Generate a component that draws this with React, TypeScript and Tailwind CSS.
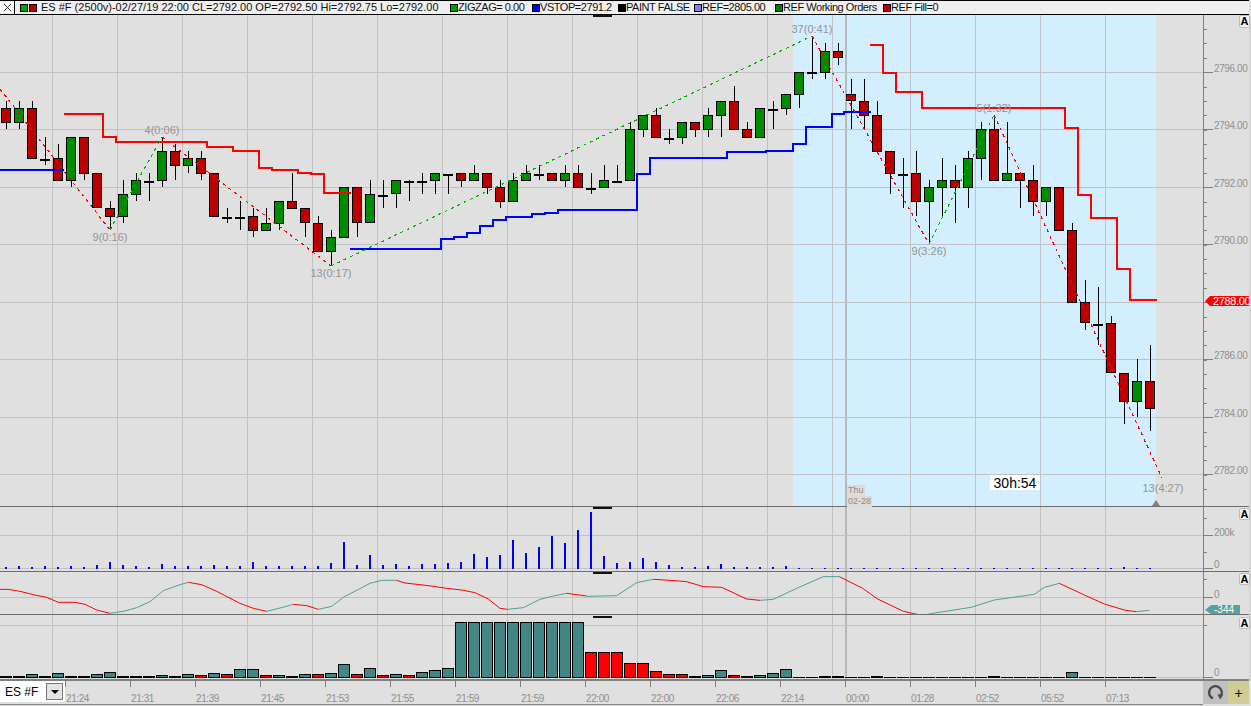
import type { ReactNode } from "react";

type Candle = [high: number, top: number, bottom: number, low: number, kind: "g" | "r" | "d"];

const candles: Candle[] = [
  [101, 108, 122, 129, "r"], [101, 108, 122, 129, "g"], [101, 108, 158, 158, "r"], [137, 159, 159, 165, "d"],
  [144, 158, 180, 180, "r"], [137, 137, 180, 187, "g"], [137, 137, 173, 180, "r"], [173, 173, 207, 207, "r"],
  [201, 208, 216, 230, "r"], [180, 194, 216, 223, "g"], [173, 180, 194, 201, "g"], [173, 181, 181, 201, "d"],
  [137, 151, 180, 187, "g"], [144, 151, 165, 180, "r"], [151, 158, 165, 173, "g"], [151, 158, 173, 180, "r"],
  [173, 173, 216, 216, "r"], [208, 217, 217, 223, "d"], [201, 217, 217, 230, "d"], [208, 216, 230, 237, "r"],
  [208, 223, 230, 230, "g"], [201, 201, 223, 230, "g"], [173, 201, 208, 208, "r"], [208, 208, 222, 237, "r"],
  [216, 223, 251, 251, "r"], [230, 237, 251, 266, "g"], [187, 187, 237, 237, "g"], [187, 187, 222, 237, "r"],
  [180, 194, 222, 222, "g"], [180, 195, 195, 208, "d"], [180, 180, 193, 208, "g"], [180, 181, 181, 201, "d"],
  [173, 181, 181, 194, "d"], [173, 173, 180, 194, "g"], [174, 174, 174, 194, "d"], [173, 173, 180, 187, "r"],
  [165, 173, 180, 180, "g"], [173, 173, 187, 194, "r"], [180, 187, 201, 208, "r"], [173, 180, 201, 201, "g"],
  [165, 173, 180, 180, "g"], [165, 174, 174, 180, "d"], [173, 173, 180, 180, "r"], [165, 173, 180, 187, "g"],
  [165, 173, 187, 187, "r"], [173, 188, 188, 194, "d"], [165, 180, 187, 187, "g"], [165, 181, 181, 181, "d"],
  [122, 129, 180, 180, "g"], [115, 115, 129, 137, "g"], [108, 115, 137, 137, "r"], [129, 138, 138, 144, "d"],
  [122, 122, 137, 144, "g"], [122, 122, 129, 137, "r"], [108, 115, 129, 137, "g"], [101, 101, 115, 137, "g"],
  [86, 101, 129, 129, "r"], [122, 129, 137, 137, "r"], [108, 108, 137, 137, "g"], [101, 109, 109, 129, "d"],
  [94, 94, 108, 115, "g"], [72, 72, 94, 108, "g"], [36, 72, 72, 79, "d"], [43, 51, 72, 79, "g"],
  [43, 51, 57, 65, "r"], [79, 94, 100, 129, "r"], [79, 101, 115, 129, "r"], [101, 115, 151, 151, "r"],
  [151, 151, 173, 194, "r"], [158, 174, 174, 208, "d"], [151, 173, 201, 216, "r"], [180, 187, 201, 244, "g"],
  [158, 180, 187, 217, "g"], [165, 180, 187, 223, "r"], [151, 158, 187, 208, "g"], [122, 129, 158, 180, "g"],
  [115, 129, 180, 180, "r"], [122, 173, 180, 180, "g"], [173, 173, 180, 208, "r"], [165, 180, 201, 216, "r"],
  [187, 187, 201, 216, "g"], [187, 187, 230, 230, "r"], [223, 230, 302, 302, "r"], [280, 302, 322, 330, "r"],
  [287, 324, 324, 345, "d"], [316, 323, 372, 372, "r"], [373, 373, 401, 424, "r"], [359, 381, 401, 417, "g"],
  [345, 381, 408, 431, "r"],
];

const volumes = [
  2, 3, 2, 3, 2, 3, 2, 4, 7, 4, 3, 2, 5, 3, 3, 3, 4, 3, 3, 7, 3, 3, 3, 3, 3, 6, 27, 4, 14, 4, 5, 3,
  5, 5, 6, 7, 15, 12, 14, 29, 16, 22, 33, 26, 39, 57, 13, 6, 7, 11, 7, 4, 2, 2, 3, 5, 2, 2, 2, 2, 3, 1, 1, 1, 1,
  1, 1, 1, 1, 1, 1, 1, 1, 1, 1, 1, 1, 1, 1, 1, 1, 1, 1, 1, 1, 1, 2, 1, 1,
];

// height above the zero line: 0 and 1 are flat black dashes, colour "t" teal, "r" red
const deltaBars: [number, "t" | "r" | "k"][] = [
  [1, "k"], [1, "k"], [3, "t"], [1, "k"], [4, "t"], [1, "k"], [1, "k"], [3, "t"], [5, "t"], [1, "k"], [1, "k"], [1, "k"],
  [2, "t"], [1, "k"], [3, "t"], [2, "r"], [4, "t"], [3, "r"], [8, "t"], [8, "t"], [2, "r"], [2, "t"], [1, "k"], [3, "t"],
  [3, "r"], [4, "t"], [13, "t"], [3, "r"], [9, "t"], [2, "r"], [3, "t"], [2, "r"], [5, "t"], [7, "t"], [9, "t"],
  [55, "t"], [55, "t"], [55, "t"], [55, "t"], [55, "t"], [55, "t"], [55, "t"], [55, "t"], [55, "t"], [55, "t"],
  [25, "r"], [25, "r"], [25, "r"], [14, "r"], [14, "r"], [6, "r"], [3, "r"], [3, "r"], [1, "k"], [2, "t"], [7, "t"],
  [2, "r"], [1, "k"], [2, "t"], [4, "t"], [8, "t"], [0, "k"], [0, "k"], [1, "k"], [1, "k"], [0, "k"], [0, "k"], [1, "k"],
  [0, "k"], [0, "k"], [0, "k"], [0, "k"], [0, "k"], [0, "k"], [0, "k"], [0, "k"], [1, "k"], [0, "k"], [0, "k"], [0, "k"],
  [0, "k"], [0, "k"], [5, "t"], [0, "k"], [0, "k"], [0, "k"], [0, "k"], [0, "k"], [0, "k"],
];

const gridXs = [52, 117, 182, 247, 312, 377, 442, 507, 572, 637, 702, 767, 832, 910, 975, 1040, 1105];

const redStops = [
  "64,114 103,114 103,137 116,137 116,142 207,142 207,146.5 233,146.5 233,151 259,151 259,168 272,168 272,170 298,170 298,173 311,173 311,174 324,174 324,193 351,193",
  "870,45 883,45 883,73 896,73 896,92 922,92 922,108 1065,108 1065,128 1078,128 1078,195 1091,195 1091,218 1117,218 1117,269 1130,269 1130,300 1157,300",
];

const blueStops = [
  "0,170 64,170",
  "350,249 441,249 441,239 454,239 454,237 467,237 467,233 480,233 480,226 493,226 493,220 506,220 506,217 532,217 532,214 545,214 545,213 558,213 558,210 637,210 637,174 650,174 650,158 727,158 727,152 766,152 766,151 793,151 793,144 806,144 806,127 832,127 832,114 844,114 844,112 871,112",
];

const zigzags: [string, string][] = [
  ["0,89 110,230", "#ff0000"],
  ["110,230 162,137", "#00b000"],
  ["162,137 331,266", "#ff0000"],
  ["331,266 812,36", "#00b000"],
  ["812,36 929,244", "#ff0000"],
  ["929,244 994,115", "#00b000"],
  ["994,115 1162,478", "#ff0000"],
];

const zigzagLabels: [string, number, number][] = [
  ["9(0:16)", 110, 241],
  ["4(0:06)", 162, 134],
  ["13(0:17)", 331, 277],
  ["37(0:41)", 812, 33],
  ["9(3:26)", 929, 255],
  ["5(1:32)", 994, 112],
  ["13(4:27)", 1163, 492],
];

const prices: [string, number][] = [
  ["2796.00", 72], ["2794.00", 129], ["2792.00", 187], ["2790.00", 244], ["2786.00", 359], ["2784.00", 417], ["2782.00", 474],
];

const osc: [string, string][] = [
  ["r", "0,268 25,268 60,274 100,284 140,292 175,307 225,307 255,313 290,330 330,340"],
  ["t", "330,340 370,334 410,323 450,305 490,272 540,254 565,247"],
  ["r", "565,247 605,254 650,274 720,310 760,325 800,334"],
  ["t", "800,334 840,324 880,313"],
  ["r", "880,313 920,317 955,328"],
  ["t", "955,328 995,319 1030,292 1110,250 1145,241 1190,241"],
  ["r", "1190,241 1215,249 1260,254 1300,259 1340,265 1385,270 1425,278 1465,297 1500,325 1522,328"],
  ["t", "1522,328 1570,323 1620,298 1660,288 1700,280"],
  ["r", "1700,280 1760,288"],
  ["t", "1760,289 1850,287 1910,248 1960,238"],
  ["r", "1960,238 2025,242 2060,245 2110,260 2165,262 2240,297 2280,301"],
  ["t", "2280,301 2320,298 2390,265 2470,230 2518,230"],
  ["r", "2518,230 2588,265 2633,297 2708,333 2741,341 2768,346"],
  ["t", "2768,346 2798,340 2913,322 2983,300 3103,283 3133,262 3178,250"],
  ["r", "3178,250 3253,285 3313,312 3373,330 3408,335"],
  ["t", "3408,335 3448,331"],
];

const oscPoints = (raw: string) =>
  raw
    .split(" ")
    .map((pair) => {
      const [x, y] = pair.split(",").map(Number);
      return `${x / 3},${500 + y / 3}`;
    })
    .join(" ");

const timeLabels: [string, number][] = [
  ["21:24", 65], ["21:31", 130], ["21:39", 195], ["21:45", 260], ["21:53", 325], ["21:55", 390], ["21:59", 455], ["21:59", 520],
  ["22:00", 585], ["22:00", 650], ["22:06", 715], ["22:14", 780], ["00:00", 845], ["01:28", 910], ["02:52", 975], ["05:52", 1040], ["07:13", 1105],
];

const legend = [
  { color: "bg-[#00a000]", text: "ZIGZAG= 0.00", cls: "ml-[9px] w-[76px]" },
  { color: "bg-[#0000ff]", text: "VSTOP=2791.2", cls: "ml-[6px] w-[82px]" },
  { color: "bg-[#000000]", text: "PAINT FALSE", cls: "ml-[4px] w-[71px]" },
  { color: "bg-[#8080ff]", text: "REF=2805.00", cls: "ml-[5px] w-[75px]" },
  { color: "bg-[#008000]", text: "REF Working Orders", cls: "ml-[6px] w-[103px]" },
  { color: "bg-[#c00000]", text: "REF Fill=0", cls: "ml-[5px] w-[60px]" },
];

function Swatch({ color }: { color: string }) {
  return <span className={`block h-[8px] w-[8px] shrink-0 border border-black ${color}`} />;
}

function Header() {
  return (
    <div className="flex h-[15px] w-[1249px] items-center whitespace-nowrap border-y border-black bg-[#f0f0f0] text-[11px] leading-none text-[#111]">
      <div className="flex h-full w-[15px] shrink-0 items-center justify-center border-r border-black bg-[#f4f4f4]">
        <svg width="9" height="9" viewBox="0 0 9 9">
          <path d="M1 1 L8 8 M8 1 L1 8" stroke="#222" strokeWidth="0.9" fill="none" />
        </svg>
      </div>
      <div className="ml-[5px]">
        <Swatch color="bg-[#00a000]" />
      </div>
      <div className="ml-[1px]">
        <Swatch color="bg-[#c00000]" />
      </div>
      <span className="ml-[4px] w-[400px] shrink-0">ES #F (2500v)-02/27/19 22:00 CL=2792.00 OP=2792.50 Hi=2792.75 Lo=2792.00</span>
      {legend.map((item) => (
        <div key={item.text} className={`flex shrink-0 items-center ${item.cls}`}>
          <Swatch color={item.color} />
          <span className="tracking-[-0.45px]">{item.text}</span>
        </div>
      ))}
    </div>
  );
}

function AutoButton({ className }: { className: string }) {
  return (
    <div
      className={`absolute left-[1239px] flex w-[11px] items-center justify-center overflow-hidden rounded-[2px] border border-[#bdbdbd] bg-[#f5f5f5] text-[11px] font-bold leading-none text-black ${className}`}
    >
      A
    </div>
  );
}

function Pane({ top, height, children, extra }: { top: number; height: number; children: ReactNode; extra?: ReactNode }) {
  return (
    <div className="relative w-full shrink-0" style={{ height }}>
      <svg className="block" width={1251} height={height} viewBox={`0 ${top} 1251 ${height}`}>
        {gridXs.map((x) => (
          <rect key={x} x={x} y={top} width={1} height={height} fill="#c2c2c2" shapeRendering="crispEdges" />
        ))}
        <rect x={845} y={top} width={2} height={height} fill="#b8b8b8" shapeRendering="crispEdges" />
        {children}
        <rect x={1203} y={top} width={1} height={height} fill="#808080" shapeRendering="crispEdges" />
        <rect x={1249} y={top} width={2} height={height} fill="#d4d4d4" shapeRendering="crispEdges" />
      </svg>
      {extra}
    </div>
  );
}

function HLine({ y, dark }: { y: number; dark?: boolean }) {
  return <rect x={0} y={y} width={1203} height={1} fill={dark ? "#6e6e6e" : "#c2c2c2"} shapeRendering="crispEdges" />;
}

function Handle({ y }: { y: number }) {
  return <rect x={593} y={y} width={19} height={2} fill="#111" shapeRendering="crispEdges" />;
}

function AxisLabel({ x, y, children }: { x: number; y: number; children: string }) {
  return (
    <text x={x} y={y} fontSize={10} letterSpacing={-0.4} fill="#8f8f8f">
      {children}
    </text>
  );
}

function Tick({ y, major }: { y: number; major?: boolean }) {
  return <rect x={1203} y={y} width={major ? 10 : 4} height={1} fill="#808080" shapeRendering="crispEdges" />;
}

function CandleMark({ candle, x }: { candle: Candle; x: number }) {
  const [high, top, bottom, low, kind] = candle;
  if (kind === "d") {
    return (
      <g shapeRendering="crispEdges">
        <rect x={x} y={high} width={1} height={low - high} fill="#000" />
        <rect x={x - 5} y={top} width={10} height={2} fill="#000" />
      </g>
    );
  }
  return (
    <g shapeRendering="crispEdges">
      <rect x={x} y={high} width={1} height={low - high} fill="#000" />
      <rect x={x - 4.5} y={top + 0.5} width={9} height={bottom - top} fill={kind === "g" ? "#008c00" : "#bb0000"} stroke="#000" strokeWidth={1} />
    </g>
  );
}

function MainPane() {
  const ticks = Array.from({ length: 33 }, (_, k) => Math.round(29 + k * 14.375));
  return (
    <Pane
      top={15}
      height={492}
      extra={
        <>
          <AutoButton className="top-0 h-[13px]" />
          <div className="absolute left-[990px] top-[460px] flex h-[15px] w-[50px] items-center justify-center bg-white text-[14px] leading-none text-black">
            30h:54
          </div>
          <div className="absolute left-[847px] top-[470px] flex flex-col items-start text-[9px] leading-[11px] text-[#9a8a7a]">
            <span className="bg-[#dcdcdc] px-[1px]">Thu</span>
            <span className="bg-[#dcdcdc] px-[1px]">02-28</span>
          </div>
        </>
      }
    >
      <rect x={793} y={15} width={363} height={491} fill="#d2eeff" shapeRendering="crispEdges" />
      {gridXs
        .filter((x) => x > 793 && x < 1156)
        .map((x) => (
          <rect key={x} x={x} y={15} width={1} height={491} fill="#c2c2c2" shapeRendering="crispEdges" />
        ))}
      <rect x={845} y={15} width={2} height={491} fill="#b8b8b8" shapeRendering="crispEdges" />
      {[72, 129, 187, 244, 302, 359, 417, 474].map((y) => (
        <HLine key={y} y={y} />
      ))}
      {candles.map((c, i) => (
        <CandleMark key={i} candle={c} x={6 + 13 * i} />
      ))}
      {redStops.map((p) => (
        <polyline key={p} points={p} fill="none" stroke="#ff0000" strokeWidth={2} shapeRendering="crispEdges" />
      ))}
      {blueStops.map((p) => (
        <polyline key={p} points={p} fill="none" stroke="#0000ff" strokeWidth={2} shapeRendering="crispEdges" />
      ))}
      {zigzags.map(([p, color]) => (
        <polyline key={p} points={p} fill="none" stroke={color} strokeWidth={1.2} strokeDasharray="3 4" shapeRendering="crispEdges" />
      ))}
      {zigzagLabels.map(([label, x, y]) => (
        <text key={label} x={x} y={y} fontSize={11} textAnchor="middle" fill="#949494">
          {label}
        </text>
      ))}
      {ticks.map((y) => (
        <Tick key={y} y={y} />
      ))}
      {prices.map(([label, y]) => (
        <g key={label}>
          <Tick y={y} major />
          <AxisLabel x={1214} y={y}>
            {label}
          </AxisLabel>
        </g>
      ))}
      <Tick y={302} major />
      <path d="M1205 301 L1210 296 L1249 296 L1249 306 L1210 306 Z" fill="#ff0000" />
      <text x={1213} y={305} fontSize={11} letterSpacing={-0.35} fill="#fff">
        2788.00
      </text>
      <path d="M1152 506 L1156 500 L1160 506 Z" fill="#808080" />
      <rect x={0} y={506} width={1249} height={1} fill="#6e6e6e" shapeRendering="crispEdges" />
      <Handle y={15} />
      <rect x={1249} y={335} width={2} height={14} fill="#222" shapeRendering="crispEdges" />
      <rect x={1249} y={300} width={2} height={3} fill="#ff0000" shapeRendering="crispEdges" />
    </Pane>
  );
}

function VolumePane() {
  return (
    <Pane top={507} height={65} extra={<AutoButton className="top-[1px] h-[12px]" />}>
      <HLine y={535} />
      <HLine y={568} />
      {volumes.map((h, i) => (
        <rect key={i} x={5 + 13 * i} y={569 - h} width={2} height={h} fill="#0000ff" shapeRendering="crispEdges" />
      ))}
      <Tick y={518} />
      <Tick y={552} />
      <Tick y={535} major />
      <Tick y={568} major />
      <AxisLabel x={1214} y={536}>
        200k
      </AxisLabel>
      <AxisLabel x={1214} y={568}>
        0
      </AxisLabel>
      <rect x={0} y={571} width={1249} height={1} fill="#6e6e6e" shapeRendering="crispEdges" />
      <Handle y={507} />
      <rect x={1249} y={567} width={2} height={1} fill="#00a000" shapeRendering="crispEdges" />
    </Pane>
  );
}

function OscPane() {
  return (
    <Pane top={572} height={43} extra={<AutoButton className="top-[1px] h-[12px]" />}>
      <HLine y={597} />
      {osc.map(([kind, raw]) => (
        <polyline key={raw} points={oscPoints(raw)} fill="none" stroke={kind === "r" ? "#ff0000" : "#4f9f9a"} strokeWidth={1} />
      ))}
      <Tick y={579} />
      <Tick y={597} major />
      <AxisLabel x={1214} y={598}>
        0
      </AxisLabel>
      <path d="M1205 610 L1211 605 L1240 605 L1240 614 L1211 614 Z" fill="#55a3a0" />
      <text x={1214} y={613} fontSize={10} fill="#fff">
        -344
      </text>
      <rect x={0} y={614} width={1249} height={1} fill="#6e6e6e" shapeRendering="crispEdges" />
      <Handle y={572} />
    </Pane>
  );
}

function DeltaPane() {
  return (
    <Pane top={615} height={66} extra={<AutoButton className="top-[2px] h-[12px]" />}>
      <HLine y={625} />
      <HLine y={677} />
      {deltaBars.map(([h, color], i) => {
        const x = 6 + 13 * i;
        if (color === "k") {
          return <rect key={i} x={x - 6} y={677 - h} width={12} height={h + 1} fill="#000" shapeRendering="crispEdges" />;
        }
        return (
          <rect
            key={i}
            x={x - 5.5}
            y={677.5 - h}
            width={11}
            height={h}
            fill={color === "t" ? "#438686" : "#ff0000"}
            stroke="#000"
            strokeWidth={1}
            shapeRendering="crispEdges"
          />
        );
      })}
      <Tick y={625} />
      <Tick y={677} major />
      <AxisLabel x={1214} y={676}>
        0
      </AxisLabel>
      <rect x={0} y={679} width={1249} height={2} fill="#808080" shapeRendering="crispEdges" />
      <Handle y={616} />
      <rect x={1249} y={674} width={2} height={1} fill="#ff0000" shapeRendering="crispEdges" />
    </Pane>
  );
}

function TimeRow() {
  return (
    <div className="relative flex h-[25px] w-full shrink-0 bg-[#e0e0e0]">
      <svg className="block" width={1203} height={25} viewBox="0 681 1203 25">
        {timeLabels.map(([label, x]) => (
          <g key={x}>
            <rect x={x} y={681} width={1} height={6} fill="#808080" shapeRendering="crispEdges" />
            <text x={x + 1} y={702} fontSize={10} letterSpacing={-0.4} fill="#8f8f8f">
              {label}
            </text>
          </g>
        ))}
        <rect x={0} y={704} width={1203} height={1} fill="#808080" shapeRendering="crispEdges" />
      </svg>
      <div className="flex h-[23px] w-[25px] items-center justify-center bg-[#c0c0c0]">
        <svg width="17" height="17" viewBox="0 0 16 16">
          <path d="M5.6 13.6 A6 6 0 1 1 12.8 11.6" fill="none" stroke="#4a4a4a" strokeWidth="2.2" />
          <path d="M9.8 9.6 L15.4 9.8 L12.4 14.6 Z" fill="#4a4a4a" />
        </svg>
      </div>
      <div className="flex h-[23px] w-[21px] items-center justify-center bg-[#cfcc98] text-[14px] leading-none text-black">+</div>
      <div className="absolute left-0 top-0 flex h-[21px] w-[65px] items-center border-[2px] border-white bg-white pl-[3px] text-[12px] leading-none text-black">
        <span className="flex-1">ES #F</span>
        <span className="flex h-[17px] w-[17px] items-center justify-center border border-[#777] bg-[#e4e4e4]">
          <span className="block h-0 w-0 border-x-[4px] border-t-[4px] border-x-transparent border-t-black" />
        </span>
      </div>
    </div>
  );
}

export default function App() {
  return (
    <div className="flex h-[706px] w-[1251px] flex-col overflow-hidden bg-[#e0e0e0] font-['Liberation_Sans',sans-serif]">
      <Header />
      <MainPane />
      <VolumePane />
      <OscPane />
      <DeltaPane />
      <TimeRow />
    </div>
  );
}
